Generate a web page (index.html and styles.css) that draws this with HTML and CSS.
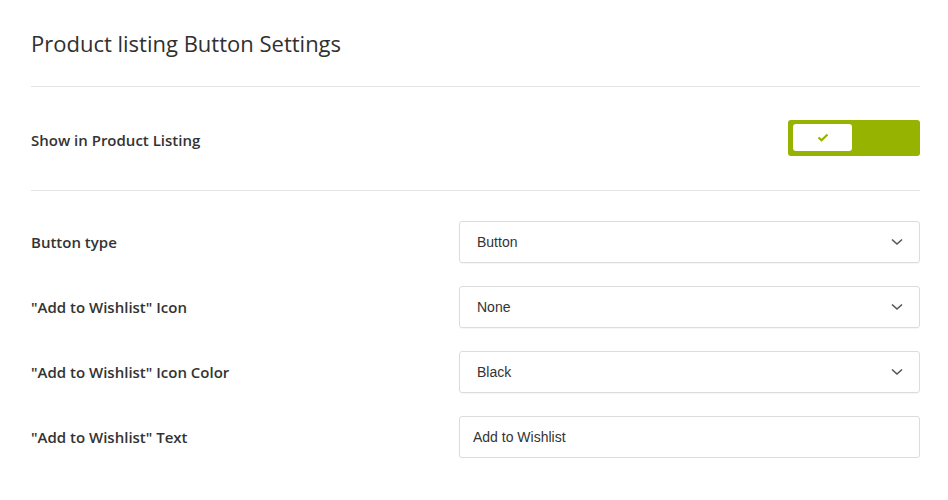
FILE: index.html
```html
<!DOCTYPE html>
<html lang="en">
<head>
    <meta charset="UTF-8">
    <meta name="viewport" content="width=device-width, initial-scale=1.0">
    <title>Product listing Button Settings</title>
    <link rel="stylesheet" href="styles.css">
</head>
<body>
    <div class="panel">
        <h1 class="title">Product listing Button Settings</h1>

        <div class="row toggle-row">
            <label class="label">Show in Product Listing</label>
            <div class="toggle">
                <span class="knob">
                    <svg width="12" height="9" viewBox="0 0 12 9"><path d="M1.5 4.5 L4.5 7.2 L10.5 1.5" fill="none" stroke="#95b300" stroke-width="2.2"/></svg>
                </span>
            </div>
        </div>

        <div class="fields">
            <div class="field">
                <label class="label">Button type</label>
                <div class="select">Button<svg class="chev" width="12" height="8" viewBox="0 0 12 8"><path d="M1 1.5 L6 6 L11 1.5" fill="none" stroke="#555" stroke-width="1.6"/></svg></div>
            </div>
            <div class="field">
                <label class="label">"Add to Wishlist" Icon</label>
                <div class="select">None<svg class="chev" width="12" height="8" viewBox="0 0 12 8"><path d="M1 1.5 L6 6 L11 1.5" fill="none" stroke="#555" stroke-width="1.6"/></svg></div>
            </div>
            <div class="field">
                <label class="label">"Add to Wishlist" Icon Color</label>
                <div class="select">Black<svg class="chev" width="12" height="8" viewBox="0 0 12 8"><path d="M1 1.5 L6 6 L11 1.5" fill="none" stroke="#555" stroke-width="1.6"/></svg></div>
            </div>
            <div class="field">
                <label class="label">"Add to Wishlist" Text</label>
                <div class="input">Add to Wishlist</div>
            </div>
        </div>
    </div>
</body>
</html>
```

FILE: styles.css
```css
body {
    margin: 0;
    background: #fff;
    font-family: 'Open Sans', sans-serif;
    color: #333;
}
.panel {
    padding: 0 28px 0 31px;
}
.title {
    margin: 0;
    padding: 28px 0 28px;
    font-size: 22px;
    line-height: 30px;
    font-weight: 400;
    color: #303030;
    border-bottom: 1px solid #e3e3e3;
}
.row {
    display: flex;
    align-items: center;
    justify-content: space-between;
}
.toggle-row {
    padding: 33px 0 34px;
    border-bottom: 1px solid #e3e3e3;
}
.toggle-row .label {
    padding-top: 3px;
}
.label {
    font-size: 15px;
    font-weight: 600;
    color: #333;
}
.toggle {
    width: 132px;
    height: 36px;
    background: #95b300;
    border-radius: 3px;
    box-sizing: border-box;
    padding: 4px 5px;
}
.knob {
    display: flex;
    align-items: center;
    justify-content: center;
    width: 59px;
    height: 27px;
    background: #fff;
    border-radius: 3px;
}
.fields {
    padding-top: 30px;
    display: grid;
    gap: 23px;
}
.field {
    display: grid;
    grid-template-columns: 428px 1fr;
    align-items: center;
}
.select, .input {
    height: 42px;
    box-sizing: border-box;
    border: 1px solid #dcdcdc;
    border-radius: 3px;
    box-shadow: 0 1px 1px rgba(0,0,0,0.04);
    display: flex;
    align-items: center;
    font-family: 'Liberation Sans', Arial, sans-serif;
    font-size: 14px;
    color: #333;
}
.select {
    padding: 0 16px 0 17px;
    justify-content: space-between;
}
.input {
    padding: 0 13px;
}
```
